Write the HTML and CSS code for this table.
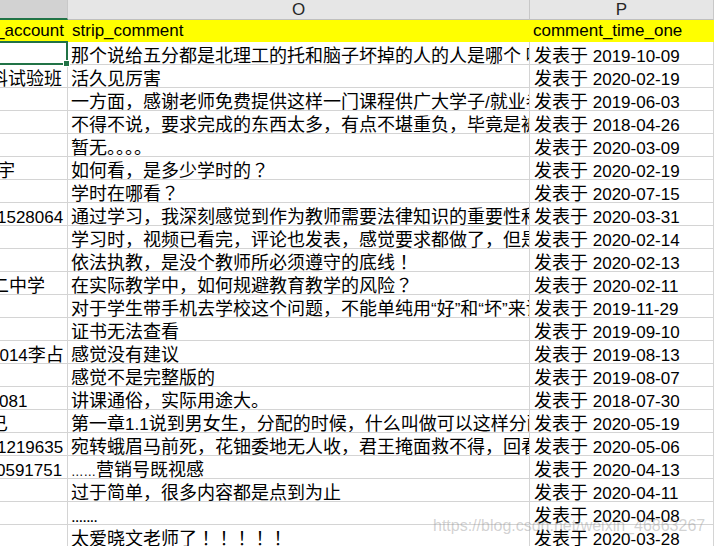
FILE: index.html
```html
<!DOCTYPE html>
<html lang="zh-CN">
<head>
<meta charset="utf-8">
<title>sheet</title>
<link rel="stylesheet" href="styles.css">
</head>
<body>
<div class="sheet">
  <div class="row hdr">
    <div class="c n sel-col"></div>
    <div class="c o">O</div>
    <div class="c p">P</div>
  </div>
  <div class="row title">
    <div class="c n"><span class="acc m5">_account</span></div>
    <div class="c o">strip_comment</div>
    <div class="c p">comment_time_one</div>
  </div>

  <div class="row"><div class="c n"></div><div class="c o">那个说给五分都是北理工的托和脑子坏掉的人的人是哪个<span class="l"> </span>呢</div><div class="c p">发表于<span class="l"> 2019-10-09</span></div></div>
  <div class="row"><div class="c n"><span class="acc m10">科试验班</span></div><div class="c o">活久见厉害</div><div class="c p">发表于<span class="l"> 2020-02-19</span></div></div>
  <div class="row"><div class="c n"></div><div class="c o">一方面，感谢老师免费提供这样一门课程供广大学子<span class="l">/</span>就业者学习</div><div class="c p">发表于<span class="l"> 2019-06-03</span></div></div>
  <div class="row"><div class="c n"></div><div class="c o">不得不说，要求完成的东西太多，有点不堪重负，毕竟是被</div><div class="c p">发表于<span class="l"> 2018-04-26</span></div></div>
  <div class="row"><div class="c n"></div><div class="c o">暂无。。。。</div><div class="c p">发表于<span class="l"> 2020-03-09</span></div></div>
  <div class="row"><div class="c n"><span class="acc m3">宇</span></div><div class="c o">如何看，是多少学时的<span class="pu" lang="zh-TW">？</span></div><div class="c p">发表于<span class="l"> 2020-02-19</span></div></div>
  <div class="row"><div class="c n"></div><div class="c o">学时在哪看<span class="pu" lang="zh-TW">？</span></div><div class="c p">发表于<span class="l"> 2020-07-15</span></div></div>
  <div class="row"><div class="c n"><span class="acc m3 l">1528064</span></div><div class="c o">通过学习，我深刻感觉到作为教师需要法律知识的重要性和必要性</div><div class="c p">发表于<span class="l"> 2020-03-31</span></div></div>
  <div class="row"><div class="c n"></div><div class="c o">学习时，视频已看完，评论也发表，感觉要求都做了，但是证书</div><div class="c p">发表于<span class="l"> 2020-02-14</span></div></div>
  <div class="row"><div class="c n"></div><div class="c o">依法执教，是没个教师所必须遵守的底线<span class="pu" lang="zh-TW">！</span></div><div class="c p">发表于<span class="l"> 2020-02-13</span></div></div>
  <div class="row"><div class="c n"><span class="acc m9">二中学</span></div><div class="c o">在实际教学中，如何规避教育教学的风险<span class="pu" lang="zh-TW">？</span></div><div class="c p">发表于<span class="l"> 2020-02-11</span></div></div>
  <div class="row"><div class="c n"></div><div class="c o">对于学生带手机去学校这个问题，不能单纯用<span class="l">“</span>好<span class="l">”</span>和<span class="l">“</span>坏<span class="l">”</span>来评价</div><div class="c p">发表于<span class="l"> 2019-11-29</span></div></div>
  <div class="row"><div class="c n"></div><div class="c o">证书无法查看</div><div class="c p">发表于<span class="l"> 2019-09-10</span></div></div>
  <div class="row"><div class="c n"><span class="acc m10"><span class="l">2014</span>李占</span></div><div class="c o">感觉没有建议</div><div class="c p">发表于<span class="l"> 2019-08-13</span></div></div>
  <div class="row"><div class="c n"></div><div class="c o">感觉不是完整版的</div><div class="c p">发表于<span class="l"> 2019-08-07</span></div></div>
  <div class="row"><div class="c n"><span class="acc m1 l">081</span></div><div class="c o">讲课通俗，实际用途大。</div><div class="c p">发表于<span class="l"> 2018-07-30</span></div></div>
  <div class="row"><div class="c n"><span class="acc m10">已</span></div><div class="c o">第一章<span class="l">1.1</span>说到男女生，分配的时候，什么叫做可以这样分配</div><div class="c p">发表于<span class="l"> 2020-05-19</span></div></div>
  <div class="row"><div class="c n"><span class="acc m3 l">1219635</span></div><div class="c o">宛转蛾眉马前死，花钿委地无人收，君王掩面救不得，回看血泪相和流</div><div class="c p">发表于<span class="l"> 2020-05-06</span></div></div>
  <div class="row"><div class="c n"><span class="acc m4 l">0591751</span></div><div class="c o"><span class="l ell">……</span>营销号既视感</div><div class="c p">发表于<span class="l"> 2020-04-13</span></div></div>
  <div class="row"><div class="c n"></div><div class="c o">过于简单，很多内容都是点到为止</div><div class="c p">发表于<span class="l"> 2020-04-11</span></div></div>
  <div class="row"><div class="c n"></div><div class="c o"><span class="l dots">.......</span></div><div class="c p">发表于<span class="l"> 2020-04-08</span></div></div>
  <div class="row"><div class="c n"></div><div class="c o">太爱晓文老师了<span class="pu" lang="zh-TW">！！！！！</span></div><div class="c p">发表于<span class="l"> 2020-03-28</span></div></div>

  <div class="sel"></div>
  <div class="wm">https://blog.csdn.net/weixin_46863267</div>
</div>
</body>
</html>
```

FILE: styles.css
```css
html, body {
  margin: 0;
  padding: 0;
  background: #ffffff;
  overflow: hidden;
}

.sheet {
  position: relative;
  width: 714px;
  height: 546px;
  overflow: hidden;
  background: #ffffff;
}

.row {
  display: grid;
  grid-template-columns: 68px 462px 184px;
  height: 23px;
}

.c {
  box-sizing: border-box;
  border-right: 1px solid #d4d4d4;
  border-bottom: 1px solid #d4d4d4;
  overflow: hidden;
  white-space: nowrap;
  padding: 1px 0 0 3px;
  font-family: "Noto Sans CJK SC", "Liberation Sans", sans-serif;
  font-size: 18px;
  line-height: 22px;
  color: #000000;
}

.c.n {
  padding-left: 0;
}

.c.p {
  padding-left: 4px;
}

.l {
  font-family: "Liberation Sans", Arial, sans-serif;
  font-size: 17px;
}

.pu {
  font-family: "Noto Sans CJK TC", "Noto Sans CJK SC", sans-serif;
}

.acc {
  display: inline-block;
}

.m1 { margin-left: -1px; }
.m3 { margin-left: -3px; }
.m4 { margin-left: -4px; }
.m5 { margin-left: -5px; }
.m9 { margin-left: -9px; }
.m10 { margin-left: -10px; }

.ell {
  font-size: 12.5px;
}

.dots {
  letter-spacing: -1px;
}

/* column header */
.hdr {
  height: 20px;
}

.hdr .c {
  background: #e6e6e6;
  border-right: 1px solid #c8c8c8;
  border-bottom: 1px solid #bfbfbf;
  padding: 0;
  text-align: center;
  font-family: "Liberation Sans", Arial, sans-serif;
  font-size: 17px;
  line-height: 19px;
  color: #262626;
}

.hdr .sel-col {
  background: #d2d2d2;
  border-bottom: 2px solid #217346;
}

/* yellow title row */
.title {
  height: 22px;
}

.title .c {
  background: #ffff00;
  border-right: none;
  border-bottom: none;
  font-family: "Liberation Sans", Arial, sans-serif;
  font-size: 17px;
  line-height: 20px;
  padding-top: 1px;
}

.title .c.o {
  padding-left: 4px;
}

.title .c.p {
  padding-left: 3px;
}

/* active cell selection */
.sel {
  position: absolute;
  left: -3px;
  top: 41px;
  width: 71px;
  height: 24px;
  box-sizing: border-box;
  border: 2px solid #217346;
}

.sel::after {
  content: "";
  position: absolute;
  right: -4px;
  bottom: -4px;
  width: 5px;
  height: 5px;
  background: #217346;
  border: 1px solid #ffffff;
}

/* blog watermark */
.wm {
  position: absolute;
  left: 433px;
  top: 516px;
  font-family: "Liberation Sans", Arial, sans-serif;
  font-size: 16px;
  line-height: 20px;
  color: rgba(140, 140, 140, 0.4);
  white-space: nowrap;
  pointer-events: none;
}
```
